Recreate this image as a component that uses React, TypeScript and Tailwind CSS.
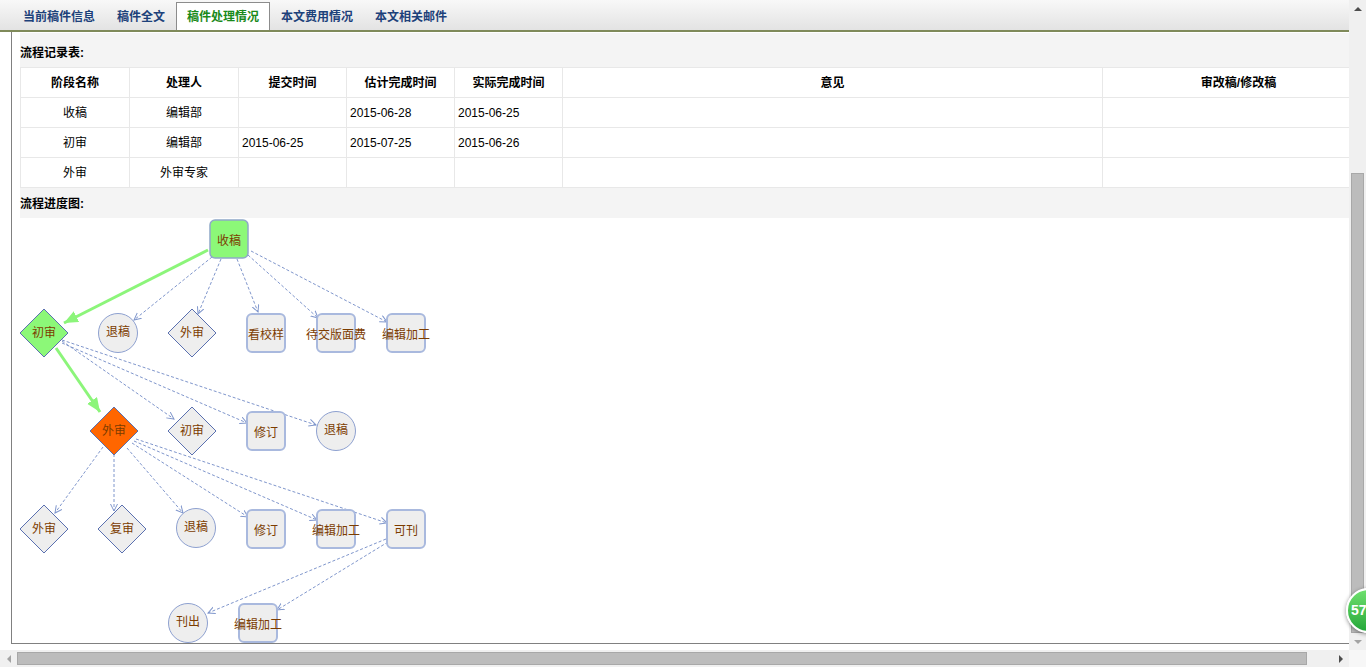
import React from 'react';

type RectNode = { x: number; y: number; label: string; green?: boolean };
type CircleNode = { cx: number; cy: number; label: string };
type DiamondNode = { cx: number; cy: number; label: string; fill?: string };

const tabs = ['当前稿件信息', '稿件全文', '稿件处理情况', '本文费用情况', '本文相关邮件'];
const activeTab = 2;

const rows = [
  ['收稿', '编辑部', '', '2015-06-28', '2015-06-25', '', ''],
  ['初审', '编辑部', '2015-06-25', '2015-07-25', '2015-06-26', '', ''],
  ['外审', '外审专家', '', '', '', '', ''],
];

const rects: RectNode[] = [
  { x: 209, y: 218, label: '收稿', green: true },
  { x: 246, y: 312, label: '看校样' },
  { x: 316, y: 312, label: '待交版面费' },
  { x: 386, y: 312, label: '编辑加工' },
  { x: 246, y: 410, label: '修订' },
  { x: 246, y: 508, label: '修订' },
  { x: 316, y: 508, label: '编辑加工' },
  { x: 386, y: 508, label: '可刊' },
  { x: 238, y: 602, label: '编辑加工' },
];

const circles: CircleNode[] = [
  { cx: 118, cy: 332, label: '退稿' },
  { cx: 336, cy: 430, label: '退稿' },
  { cx: 196, cy: 527, label: '退稿' },
  { cx: 188, cy: 622, label: '刊出' },
];

const diamonds: DiamondNode[] = [
  { cx: 44, cy: 332, label: '初审', fill: '#8cf878' },
  { cx: 192, cy: 332, label: '外审' },
  { cx: 114, cy: 430, label: '外审', fill: '#ff6600' },
  { cx: 192, cy: 430, label: '初审' },
  { cx: 44, cy: 528, label: '外审' },
  { cx: 122, cy: 528, label: '复审' },
];

// dashed transitions, page coordinates
const dashed: number[][] = [
  [212, 256, 134, 319],
  [221, 258, 198, 313],
  [237, 258, 258, 311],
  [248, 254, 318, 317],
  [251, 250, 387, 321],
  [62, 340, 174, 418],
  [62, 342, 247, 422],
  [62, 339, 316, 424],
  [103, 446, 55, 512],
  [114, 453, 114, 510],
  [127, 447, 183, 512],
  [132, 442, 248, 516],
  [134, 440, 317, 519],
  [136, 438, 387, 522],
  [386, 538, 208, 612],
  [388, 541, 277, 609],
];

const green: number[][] = [
  [208, 249, 64, 322],
  [56, 347, 100, 411],
];

const FlowChart: React.FC = () => (
  <svg width="1337" height="426" className="block font-['Noto_Sans_CJK_SC',sans-serif]">
    <defs>
      <marker id="open" markerUnits="userSpaceOnUse" markerWidth="10" markerHeight="10" refX="7" refY="4" orient="auto">
        <path d="M0,0.5 L7,4 L0,7.5" fill="none" stroke="#7f96cc" strokeWidth="1" />
      </marker>
      <marker id="solid" markerUnits="userSpaceOnUse" markerWidth="16" markerHeight="14" refX="14" refY="6" orient="auto">
        <path d="M0,0 L14,6 L0,12 z" fill="#8cf57a" />
      </marker>
    </defs>
    <g transform="translate(-12,-217)">
      {dashed.map(([x1, y1, x2, y2], i) => (
        <line key={i} x1={x1} y1={y1} x2={x2} y2={y2} stroke="#7f96cc" strokeWidth="1" strokeDasharray="3 2" markerEnd="url(#open)" />
      ))}
      {green.map(([x1, y1, x2, y2], i) => (
        <line key={i} x1={x1} y1={y1} x2={x2} y2={y2} stroke="#8cf57a" strokeWidth="3" markerEnd="url(#solid)" />
      ))}
      {rects.map((r, i) => (
        <g key={i}>
          <rect
            x={r.x + 1}
            y={r.y + 1}
            width="38"
            height="38"
            rx="5"
            fill={r.green ? '#8cf878' : '#eeeeee'}
            stroke={r.green ? '#8fa8c8' : '#a9b9de'}
            strokeWidth={r.green ? 1.5 : 2}
          />
          <text x={r.x + 20} y={r.y + 20} textAnchor="middle" dominantBaseline="central" fontSize="12" fill="#7c3c00">
            {r.label}
          </text>
        </g>
      ))}
      {circles.map((c, i) => (
        <g key={i}>
          <circle cx={c.cx} cy={c.cy} r="19.5" fill="#eeeeee" stroke="#8da0d0" strokeWidth="1" />
          <text x={c.cx} y={c.cy - 3} textAnchor="middle" dominantBaseline="central" fontSize="12" fill="#7c3c00">
            {c.label}
          </text>
        </g>
      ))}
      {diamonds.map((d, i) => (
        <g key={i}>
          <polygon
            points={`${d.cx},${d.cy - 24} ${d.cx + 24},${d.cy} ${d.cx},${d.cy + 24} ${d.cx - 24},${d.cy}`}
            fill={d.fill || '#eeeeee'}
            stroke="#5a70b0"
            strokeWidth="1"
          />
          <text x={d.cx} y={d.cy - 1.5} textAnchor="middle" dominantBaseline="central" fontSize="12" fill="#7c3c00">
            {d.label}
          </text>
        </g>
      ))}
    </g>
  </svg>
);

const colWidths = ['w-[109px]', 'w-[109px]', 'w-[108px]', 'w-[108px]', 'w-[108px]', 'w-[540px]', 'w-[272px]'];
const headers = ['阶段名称', '处理人', '提交时间', '估计完成时间', '实际完成时间', '意见', '审改稿/修改稿'];

const App: React.FC = () => {
  return (
    <div className="relative w-[1366px] h-[667px] overflow-hidden bg-white text-black font-['Liberation_Sans','Noto_Sans_CJK_SC',sans-serif] text-[12px]">
      <div className="flex h-[650px]">
        <div className="w-[1349px] flex flex-col">
          {/* tabs */}
          <div className="h-[32px] shrink-0 bg-gradient-to-b from-[#f8f8f8] to-[#e3e3e3] border-b-2 border-[#7f8a5a] flex items-end pl-[12px]">
            {tabs.map((t, i) => (
              <div
                key={t}
                className={`h-[28px] px-[10px] flex items-center font-bold border border-b-0 ${
                  i === activeTab ? 'bg-white border-[#8c8c8c] text-[#1a8a1a]' : 'border-transparent text-[#1d417a]'
                }`}
              >
                {t}
              </div>
            ))}
          </div>
          {/* content box */}
          <div className="ml-[11px] h-[612px] border-l border-b border-[#808080] overflow-hidden">
            <div className="w-[1362px] pl-[8px] pt-[1px]">
              <div className="h-[34px] bg-[#f4f4f4] flex items-center pt-[5px] font-bold">流程记录表:</div>
              <table className="table-fixed border-collapse w-[1354px]">
                <colgroup>
                  {colWidths.map((w, i) => (
                    <col key={i} className={w} />
                  ))}
                </colgroup>
                <tbody>
                  <tr className="h-[30px]">
                    {headers.map((h) => (
                      <td key={h} className="border border-[#e8e8e8] text-center font-bold p-0">
                        {h}
                      </td>
                    ))}
                  </tr>
                  {rows.map((r, ri) => (
                    <tr key={ri} className="h-[30px]">
                      {r.map((c, ci) => (
                        <td
                          key={ci}
                          className={`border border-[#e8e8e8] p-0 ${ci < 2 ? 'text-center' : 'text-left pl-[3px]'}`}
                        >
                          {c}
                        </td>
                      ))}
                    </tr>
                  ))}
                </tbody>
              </table>
              <div className="h-[30px] bg-[#f4f4f4] flex items-center pt-[2px] font-bold">流程进度图:</div>
              <div className="-ml-[8px]">
                <FlowChart />
              </div>
            </div>
          </div>
        </div>
        {/* vertical scrollbar */}
        <div className="w-[17px] bg-[#f0f0f0] flex flex-col items-center">
          <div className="h-[17px] flex items-center justify-center">
            <div className="w-0 h-0 border-l-[4px] border-r-[4px] border-b-[4px] border-l-transparent border-r-transparent border-b-[#4d4d4d]" />
          </div>
          <div className="h-[156px]" />
          <div className="h-[460px] w-[13px] bg-[#bcbcbc] border border-[#a8a8a8]" />
          <div className="flex-1 flex items-center justify-center">
            <div className="w-0 h-0 border-l-[4px] border-r-[4px] border-t-[4px] border-l-transparent border-r-transparent border-t-[#a3a3a3]" />
          </div>
        </div>
      </div>
      {/* horizontal scrollbar */}
      <div className="h-[17px] flex bg-[#f0f0f0]">
        <div className="w-[17px] flex items-center justify-center">
          <div className="w-0 h-0 border-t-[4px] border-b-[4px] border-r-[4px] border-t-transparent border-b-transparent border-r-[#a3a3a3]" />
        </div>
        <div className="w-[1290px] my-[2px] bg-[#bcbcbc] border border-[#a8a8a8]" />
        <div className="w-[25px]" />
        <div className="w-[17px] flex items-center justify-center">
          <div className="w-0 h-0 border-t-[4px] border-b-[4px] border-l-[4px] border-t-transparent border-b-transparent border-l-[#4d4d4d]" />
        </div>
        <div className="w-[17px] bg-[#f7f7f7]" />
      </div>
      {/* floating badge */}
      <div className="absolute left-[1346px] top-[588px] w-[45px] h-[45px] rounded-full border-2 border-white bg-gradient-to-b from-[#6ee06e] to-[#22a83a] shadow-[0_1px_4px_rgba(0,0,0,0.45)] flex items-center pl-[3px] text-white font-bold text-[14px]">
        57
      </div>
    </div>
  );
};

export default App;
